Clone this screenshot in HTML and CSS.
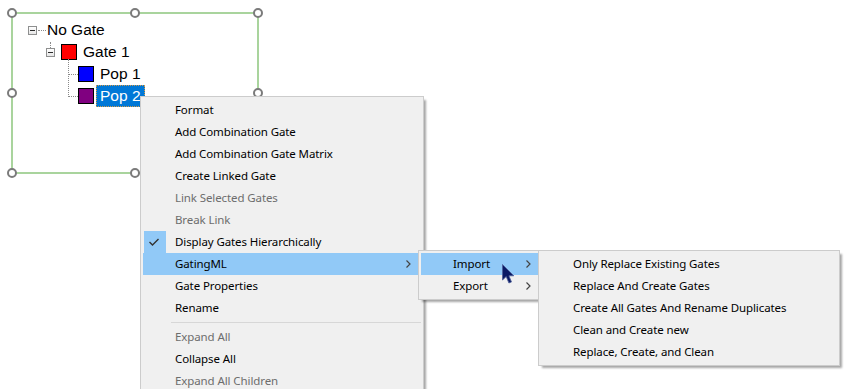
FILE: index.html
```html
<!DOCTYPE html>
<html lang="en">
<head>
    <meta charset="UTF-8">
    <title>Gate Tree - Context Menu</title>
    <link rel="stylesheet" href="styles.css">
</head>
<body>

<div class="screen">
    <div class="gate">
        <span class="handle h-tl"></span>
        <span class="handle h-tc"></span>
        <span class="handle h-tr"></span>
        <span class="handle h-ml"></span>
        <span class="handle h-mr"></span>
        <span class="handle h-bl"></span>
        <span class="handle h-bc"></span>
        <span class="handle h-br"></span>

        <ul class="tree">
            <li class="node level-0">
                <span class="expander"></span>
                <span class="hline"></span>
                <span class="label">No Gate</span>
            </li>
            <li class="node level-1">
                <span class="expander stub"></span>
                <span class="swatch red"></span>
                <span class="label">Gate 1</span>
            </li>
            <li class="node level-2">
                <span class="elbow first"></span>
                <span class="swatch blue"></span>
                <span class="label">Pop 1</span>
            </li>
            <li class="node level-2">
                <span class="elbow"></span>
                <span class="swatch purple"></span>
                <span class="label selected">Pop 2</span>
            </li>
        </ul>
    </div>

    <!-- main context menu -->
    <div class="menu main-menu">
        <div class="item"><span class="check"></span><span class="text">Format</span></div>
        <div class="item"><span class="check"></span><span class="text">Add Combination Gate</span></div>
        <div class="item"><span class="check"></span><span class="text">Add Combination Gate Matrix</span></div>
        <div class="item"><span class="check"></span><span class="text">Create Linked Gate</span></div>
        <div class="item disabled"><span class="check"></span><span class="text">Link Selected Gates</span></div>
        <div class="item disabled"><span class="check"></span><span class="text">Break Link</span></div>
        <div class="item">
            <span class="check on">
                <svg width="22" height="22" viewBox="0 0 22 22"><polyline points="5.5,11 8.5,14 14.5,8" fill="none" stroke="#333" stroke-width="1.4"/></svg>
            </span>
            <span class="text">Display Gates Hierarchically</span>
        </div>
        <div class="item active has-sub">
            <span class="check"></span><span class="text">GatingML</span>
            <svg class="arrow" width="5" height="8" viewBox="0 0 5 8"><polyline points="0.5,0.5 4,4 0.5,7.5" fill="none" stroke="#444" stroke-width="1.2"/></svg>
        </div>
        <div class="item"><span class="check"></span><span class="text">Gate Properties</span></div>
        <div class="item"><span class="check"></span><span class="text">Rename</span></div>
        <div class="separator"></div>
        <div class="item disabled"><span class="check"></span><span class="text">Expand All</span></div>
        <div class="item"><span class="check"></span><span class="text">Collapse All</span></div>
        <div class="item disabled"><span class="check"></span><span class="text">Expand All Children</span></div>
    </div>

    <!-- GatingML submenu -->
    <div class="menu sub-gating">
        <div class="item active has-sub">
            <span class="check"></span><span class="text">Import</span>
            <svg class="arrow" width="5" height="8" viewBox="0 0 5 8"><polyline points="0.5,0.5 4,4 0.5,7.5" fill="none" stroke="#444" stroke-width="1.2"/></svg>
        </div>
        <div class="item has-sub">
            <span class="check"></span><span class="text">Export</span>
            <svg class="arrow" width="5" height="8" viewBox="0 0 5 8"><polyline points="0.5,0.5 4,4 0.5,7.5" fill="none" stroke="#444" stroke-width="1.2"/></svg>
        </div>
    </div>

    <!-- Import submenu -->
    <div class="menu sub-import">
        <div class="item"><span class="check"></span><span class="text">Only Replace Existing Gates</span></div>
        <div class="item"><span class="check"></span><span class="text">Replace And Create Gates</span></div>
        <div class="item"><span class="check"></span><span class="text">Create All Gates And Rename Duplicates</span></div>
        <div class="item"><span class="check"></span><span class="text">Clean and Create new</span></div>
        <div class="item"><span class="check"></span><span class="text">Replace, Create, and Clean</span></div>
    </div>

    <svg class="cursor" width="14" height="21" viewBox="0 0 14 21">
        <path d="M0.5,0.5 L0.5,16 L4.2,12.6 L6.9,19 L9.5,17.9 L6.9,11.8 L11.8,11.8 Z" fill="#0a1a66" stroke="#4f5f99" stroke-width="0.8" stroke-linejoin="round"/>
    </svg>
</div>

</body>
</html>
```

FILE: styles.css
```css
body {
    margin: 0;
    background: #fff;
}
.screen {
    position: relative;
    width: 854px;
    height: 389px;
    overflow: hidden;
    background: #fff;
}

/* gate rectangle on the plot */
.gate {
    position: absolute;
    left: 11px;
    top: 12px;
    width: 248px;
    height: 162px;
    box-sizing: border-box;
    border: 2px solid #a9d49d;
}
.handle {
    position: absolute;
    width: 10px;
    height: 10px;
    box-sizing: border-box;
    border: 2px solid #7b7b7b;
    border-radius: 50%;
    background: #fff;
}
.h-tl { left: -6px; top: -6px; }
.h-tc { left: 117px; top: -6px; }
.h-tr { left: 240px; top: -6px; }
.h-ml { left: -6px; top: 74px; }
.h-mr { left: 240px; top: 74px; }
.h-bl { left: -6px; top: 154px; }
.h-bc { left: 117px; top: 154px; }
.h-br { left: 240px; top: 154px; }

/* tree */
.tree {
    list-style: none;
    margin: 0;
    padding: 5px 0 0 0;
    font-family: "Liberation Sans", Arial, sans-serif;
    font-size: 15.5px;
    color: #000;
}
.node {
    display: flex;
    align-items: center;
    height: 22px;
}
.level-0 { padding-left: 15px; }
.level-1 { padding-left: 33px; }
.level-2 { padding-left: 55px; }

.expander {
    position: relative;
    width: 9px;
    height: 9px;
    box-sizing: border-box;
    border: 1px solid #8e8f8f;
    background: linear-gradient(#fff, #e6e6e6);
}
.expander::after {
    content: "";
    position: absolute;
    left: 1px;
    top: 3px;
    width: 5px;
    height: 1px;
    background: #2a2a2a;
}
.expander.stub::before {
    content: "";
    position: absolute;
    left: 3px;
    top: -7px;
    height: 6px;
    border-left: 1px dotted #8a8a8a;
}
.hline {
    width: 8px;
    margin-left: 1px;
    border-top: 1px dotted #8a8a8a;
}
.level-0 .label { margin-left: 1px; }
.level-1 .swatch { margin-left: 6px; }

.elbow {
    align-self: flex-start;
    width: 9px;
    height: 15px;
    margin-top: -4px;
    border-left: 1px dotted #8a8a8a;
    border-bottom: 1px dotted #8a8a8a;
}
.elbow:not(.first) {
    height: 22px;
    margin-top: -11px;
}
.swatch {
    width: 16px;
    height: 16px;
    box-sizing: border-box;
    border: 1px solid #000;
}
.red { background: #ff0000; }
.blue { background: #0000ff; }
.purple { background: #800080; }

.label {
    margin-left: 6px;
    line-height: 22px;
}
.label.selected {
    margin-left: 2px;
    padding: 0 4px;
    background: #0078d7;
    color: #fff;
    outline: 1px dotted #d49a4a;
    outline-offset: -1px;
}

/* context menus */
.menu {
    position: absolute;
    box-sizing: border-box;
    padding: 2px;
    border: 1px solid #cccccc;
    background: #f0f0f0;
    box-shadow: 3px 3px 2px -1px rgba(0, 0, 0, 0.35);
    font-family: "Noto Sans", "Open Sans", sans-serif;
    font-size: 11.5px;
    letter-spacing: -0.1px;
    color: #000;
}
.main-menu {
    left: 140px;
    top: 96px;
    width: 284px;
    height: 300px;
}
.sub-gating {
    left: 418px;
    top: 250px;
    width: 126px;
}
.sub-import {
    left: 538px;
    top: 250px;
    width: 302px;
}
.item {
    display: flex;
    align-items: center;
    height: 22px;
    white-space: nowrap;
}
.item.active {
    background: #91c9f7;
}
.item.disabled {
    color: #6d6d6d;
}
.check {
    flex: none;
    width: 22px;
    height: 22px;
    margin-left: 1px;
}
.check.on {
    background: #91c9f7;
}
.check svg {
    display: block;
}
.text {
    margin-left: 9px;
    margin-bottom: 2px;
    flex: 1;
}
.arrow {
    margin-right: 10px;
}
.separator {
    height: 1px;
    margin: 3px 0 3px 28px;
    background: #d7d7d7;
}

.cursor {
    position: absolute;
    left: 502px;
    top: 264px;
}
```
